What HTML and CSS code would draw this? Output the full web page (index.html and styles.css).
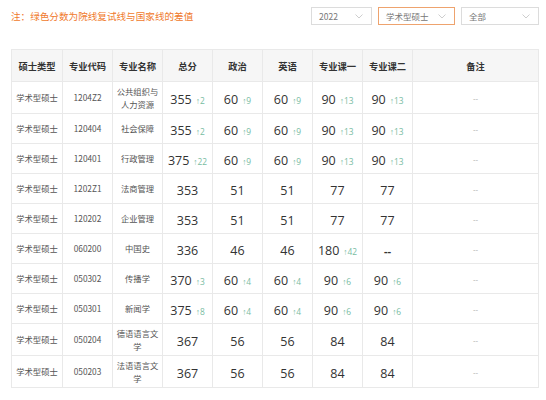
FILE: index.html
```html
<!DOCTYPE html>
<html lang="zh">
<head>
<meta charset="utf-8">
<link rel="stylesheet" href="styles.css">
</head>
<body>
<div class="page">
  <div class="topbar">
    <div class="note">注：绿色分数为院线复试线与国家线的差值</div>
    <div class="filters">
      <div class="select s1"><span>2022</span><svg class="chev" width="8" height="5" viewBox="0 0 8 5"><path d="M0.5 0.5 L4 4 L7.5 0.5" fill="none" stroke="#c8c8c8" stroke-width="0.9"/></svg></div>
      <div class="select s2 active"><span>学术型硕士</span><svg class="chev" width="8" height="5" viewBox="0 0 8 5"><path d="M0.5 0.5 L4 4 L7.5 0.5" fill="none" stroke="#c8c8c8" stroke-width="0.9"/></svg></div>
      <div class="select s3"><span>全部</span><svg class="chev" width="8" height="5" viewBox="0 0 8 5"><path d="M0.5 0.5 L4 4 L7.5 0.5" fill="none" stroke="#c8c8c8" stroke-width="0.9"/></svg></div>
    </div>
  </div>
  <table class="grid">
    <colgroup>
      <col class="c1"><col class="c"><col class="c"><col class="c"><col class="c"><col class="c"><col class="c"><col class="c"><col class="clast">
    </colgroup>
    <thead>
      <tr><th>硕士类型</th><th>专业代码</th><th>专业名称</th><th>总分</th><th>政治</th><th>英语</th><th>专业课一</th><th>专业课二</th><th>备注</th></tr>
    </thead>
    <tbody>
      <tr class="tall"><td class="t">学术型硕士</td><td class="t">1204Z2</td><td class="t">公共组织与<br>人力资源</td><td><span class="n">355</span><span class="d">↑2</span></td><td><span class="n">60</span><span class="d">↑9</span></td><td><span class="n">60</span><span class="d">↑9</span></td><td><span class="n">90</span><span class="d">↑13</span></td><td><span class="n">90</span><span class="d">↑13</span></td><td class="r">--</td></tr>
      <tr><td class="t">学术型硕士</td><td class="t">120404</td><td class="t">社会保障</td><td><span class="n">355</span><span class="d">↑2</span></td><td><span class="n">60</span><span class="d">↑9</span></td><td><span class="n">60</span><span class="d">↑9</span></td><td><span class="n">90</span><span class="d">↑13</span></td><td><span class="n">90</span><span class="d">↑13</span></td><td class="r">--</td></tr>
      <tr><td class="t">学术型硕士</td><td class="t">120401</td><td class="t">行政管理</td><td><span class="n">375</span><span class="d">↑22</span></td><td><span class="n">60</span><span class="d">↑9</span></td><td><span class="n">60</span><span class="d">↑9</span></td><td><span class="n">90</span><span class="d">↑13</span></td><td><span class="n">90</span><span class="d">↑13</span></td><td class="r">--</td></tr>
      <tr><td class="t">学术型硕士</td><td class="t">1202Z1</td><td class="t">法商管理</td><td><span class="n">353</span></td><td><span class="n">51</span></td><td><span class="n">51</span></td><td><span class="n">77</span></td><td><span class="n">77</span></td><td class="r">--</td></tr>
      <tr><td class="t">学术型硕士</td><td class="t">120202</td><td class="t">企业管理</td><td><span class="n">353</span></td><td><span class="n">51</span></td><td><span class="n">51</span></td><td><span class="n">77</span></td><td><span class="n">77</span></td><td class="r">--</td></tr>
      <tr><td class="t">学术型硕士</td><td class="t">060200</td><td class="t">中国史</td><td><span class="n">336</span></td><td><span class="n">46</span></td><td><span class="n">46</span></td><td><span class="n">180</span><span class="d">↑42</span></td><td><span class="n dash">--</span></td><td class="r">--</td></tr>
      <tr><td class="t">学术型硕士</td><td class="t">050302</td><td class="t">传播学</td><td><span class="n">370</span><span class="d">↑3</span></td><td><span class="n">60</span><span class="d">↑4</span></td><td><span class="n">60</span><span class="d">↑4</span></td><td><span class="n">90</span><span class="d">↑6</span></td><td><span class="n">90</span><span class="d">↑6</span></td><td class="r">--</td></tr>
      <tr><td class="t">学术型硕士</td><td class="t">050301</td><td class="t">新闻学</td><td><span class="n">375</span><span class="d">↑8</span></td><td><span class="n">60</span><span class="d">↑4</span></td><td><span class="n">60</span><span class="d">↑4</span></td><td><span class="n">90</span><span class="d">↑6</span></td><td><span class="n">90</span><span class="d">↑6</span></td><td class="r">--</td></tr>
      <tr class="tall"><td class="t">学术型硕士</td><td class="t">050204</td><td class="t">德语语言文<br>学</td><td><span class="n">367</span></td><td><span class="n">56</span></td><td><span class="n">56</span></td><td><span class="n">84</span></td><td><span class="n">84</span></td><td class="r">--</td></tr>
      <tr class="tall"><td class="t">学术型硕士</td><td class="t">050203</td><td class="t">法语语言文<br>学</td><td><span class="n">367</span></td><td><span class="n">56</span></td><td><span class="n">56</span></td><td><span class="n">84</span></td><td><span class="n">84</span></td><td class="r">--</td></tr>
    </tbody>
  </table>
</div>
</body>
</html>
```
FILE: styles.css
```css
* { box-sizing: border-box; }
html, body { margin: 0; padding: 0; background: #fff; }
body {
  font-family: "Open Sans", "Noto Sans CJK SC", sans-serif;
  color: #333;
}
.page {
  padding: 7px 7px 0 11px;
}
.topbar {
  display: flex;
  align-items: center;
  justify-content: space-between;
  height: 18px;
}
.note {
  font-family: "Noto Sans CJK SC", sans-serif;
  font-size: 9.6px;
  color: #f07a2c;
  line-height: 18px;
}
.filters {
  display: flex;
  gap: 6px;
}
.select {
  display: flex;
  align-items: center;
  justify-content: space-between;
  height: 18px;
  border: 1px solid #dcdcdc;
  padding: 0 8px 0 7px;
  font-family: "Noto Sans CJK SC", sans-serif;
  font-size: 8.5px;
  color: #777;
  background: #fff;
}
.select.s1 { width: 61px; }
.select.s2 { width: 77px; }
.select.s3 { width: 78px; }
.select.active { border-color: #eea36e; }
.chev { display: block; }

.grid {
  margin-top: 24px;
  width: 527px;
  border-collapse: collapse;
  table-layout: fixed;
}
.grid col.c1 { width: 51px; }
.grid col.c { width: 50px; }
.grid col.clast { width: 126px; }
.grid th, .grid td {
  border: 1px solid #e9e9e9;
  text-align: center;
  vertical-align: middle;
  padding: 0;
}
.grid th {
  background: #f6f6f6;
  height: 32px;
  font-family: "Noto Sans CJK SC", sans-serif;
  font-size: 9.3px;
  font-weight: 700;
  color: #333;
}
.grid td { height: 30px; }
.grid tr.tall td { height: 32px; }
.grid td.t {
  font-family: "Noto Sans CJK SC", sans-serif;
  font-size: 8.3px;
  color: #555;
  line-height: 13px;
}
.n {
  font-family: "Open Sans", sans-serif;
  font-size: 12.5px;
  color: #333;
}
.n.dash { font-weight: 700; font-size: 11px; }
.d {
  font-family: "Open Sans", sans-serif;
  font-size: 8.4px;
  color: #78bca2;
  margin-left: 4px;
}
.grid td.r {
  font-size: 8px;
  color: #aaa;
}
```
